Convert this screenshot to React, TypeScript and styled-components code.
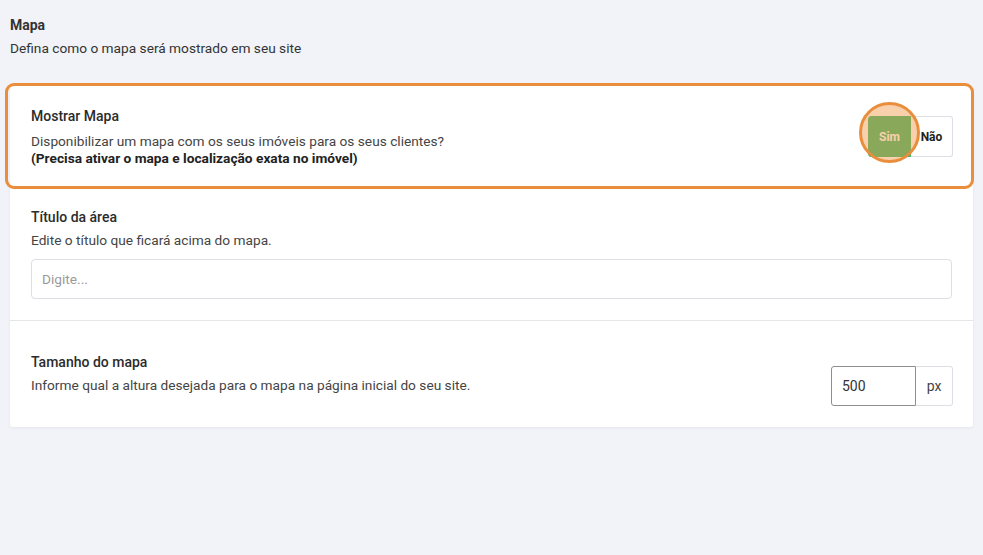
import React from "react";
import styled, { createGlobalStyle } from "styled-components";

const Global = createGlobalStyle`
  html, body { margin: 0; padding: 0; background: #f1f3f8; }
  body { font-family: Roboto, "Liberation Sans", Arial, sans-serif; color: #333; }
  * { box-sizing: border-box; }
`;

const Page = styled.div`
  padding: 15px 10px 0 10px;
  min-height: 555px;
`;

const Header = styled.header`
  display: flex;
  flex-direction: column;
  margin-bottom: 28px;
`;

const PageTitle = styled.h1`
  margin: 0;
  font-size: 14px;
  line-height: 20px;
  font-weight: 700;
  color: #333;
`;

const PageSubtitle = styled.p`
  margin: 3px 0 0;
  font-size: 13.7px;
  line-height: 20px;
  color: #333;
`;

const Card = styled.div`
  background: #fff;
  border-radius: 3px;
  box-shadow: 0 1px 3px rgba(30, 40, 80, 0.06);
`;

const Section = styled.section<{ $pt: number; $pb: number; $divider?: boolean; $align?: string }>`
  position: relative;
  display: flex;
  align-items: ${(p) => p.$align || "center"};
  justify-content: space-between;
  gap: 20px;
  padding: ${(p) => p.$pt}px 21px ${(p) => p.$pb}px 21px;
  border-bottom: ${(p) => (p.$divider ? "1px solid #e4e6ea" : "none")};
`;

const TextCol = styled.div<{ $mt?: number }>`
  display: flex;
  flex-direction: column;
  flex: 1;
  margin-top: ${(p) => p.$mt || 0}px;
`;

const Label = styled.div`
  font-size: 14px;
  line-height: 20px;
  font-weight: 500;
  color: #2b2b2b;
`;

const Desc = styled.div<{ $mt: number }>`
  margin-top: ${(p) => p.$mt}px;
  font-size: 13.7px;
  line-height: 17px;
  color: #444;
`;

const Strong = styled.strong`
  display: block;
  font-weight: 700;
  color: #222;
`;

const Highlight = styled.div`
  position: absolute;
  left: -5px;
  right: -1px;
  top: -3px;
  bottom: 0;
  border: 3px solid #e98e3c;
  border-radius: 9px;
  pointer-events: none;
`;

const Toggle = styled.div`
  position: relative;
  display: flex;
  margin-right: -1px;
`;

const ToggleBtn = styled.button<{ $active?: boolean }>`
  height: 41px;
  width: ${(p) => (p.$active ? 43 : 42)}px;
  padding: 0;
  font-family: inherit;
  font-size: 12px;
  font-weight: 700;
  border: 1px solid ${(p) => (p.$active ? "#37b76a" : "#dcdfe4")};
  border-left-width: ${(p) => (p.$active ? 1 : 0)}px;
  background: ${(p) => (p.$active ? "#37b76a" : "#fff")};
  color: ${(p) => (p.$active ? "#fff" : "#222")};
  border-radius: ${(p) => (p.$active ? "3px 0 0 3px" : "0 3px 3px 0")};
`;

const Spot = styled.div`
  position: absolute;
  left: -9px;
  top: -14px;
  width: 61px;
  height: 61px;
  border-radius: 50%;
  border: 3px solid #e98e3c;
  background: rgba(240, 150, 70, 0.45);
  pointer-events: none;
`;

const TextInput = styled.input`
  display: block;
  width: 100%;
  height: 40px;
  margin-top: 10px;
  padding: 0 10px;
  border: 1px solid #dcdfe4;
  border-radius: 4px;
  font-family: inherit;
  font-size: 13.7px;
  color: #333;
  outline: none;
  &::placeholder { color: #9a9a9a; }
`;

const InputGroup = styled.div`
  display: flex;
  margin-top: 14px;
  margin-right: -1px;
`;

const NumberInput = styled.input`
  width: 85px;
  height: 40px;
  padding: 0 10px;
  border: 1px solid #8e8e8e;
  border-radius: 3px 0 0 3px;
  font-family: inherit;
  font-size: 14px;
  color: #333;
  outline: none;
`;

const Addon = styled.span`
  display: flex;
  align-items: center;
  justify-content: center;
  width: 37px;
  height: 40px;
  border: 1px solid #dcdfe4;
  border-left: 0;
  border-radius: 0 3px 3px 0;
  font-size: 14px;
  color: #444;
`;

export default function App() {
  return (
    <>
      <Global />
      <Page>
        <Header>
          <PageTitle>Mapa</PageTitle>
          <PageSubtitle>Defina como o mapa será mostrado em seu site</PageSubtitle>
        </Header>
        <Card>
          <Section $pt={20} $pb={22}>
            <Highlight />
            <TextCol>
              <Label>Mostrar Mapa</Label>
              <Desc $mt={7}>
                Disponibilizar um mapa com os seus imóveis para os seus clientes?
                <Strong>(Precisa ativar o mapa e localização exata no imóvel)</Strong>
              </Desc>
            </TextCol>
            <Toggle>
              <ToggleBtn $active>Sim</ToggleBtn>
              <ToggleBtn>Não</ToggleBtn>
              <Spot />
            </Toggle>
          </Section>
          <Section $pt={18} $pb={21} $divider $align="stretch">
            <TextCol>
              <Label>Título da área</Label>
              <Desc $mt={5}>Edite o título que ficará acima do mapa.</Desc>
              <TextInput placeholder="Digite..." />
            </TextCol>
          </Section>
          <Section $pt={31} $pb={21} $align="flex-start">
            <TextCol>
              <Label>Tamanho do mapa</Label>
              <Desc $mt={5}>Informe qual a altura desejada para o mapa na página inicial do seu site.</Desc>
            </TextCol>
            <InputGroup>
              <NumberInput defaultValue="500" />
              <Addon>px</Addon>
            </InputGroup>
          </Section>
        </Card>
      </Page>
    </>
  );
}
